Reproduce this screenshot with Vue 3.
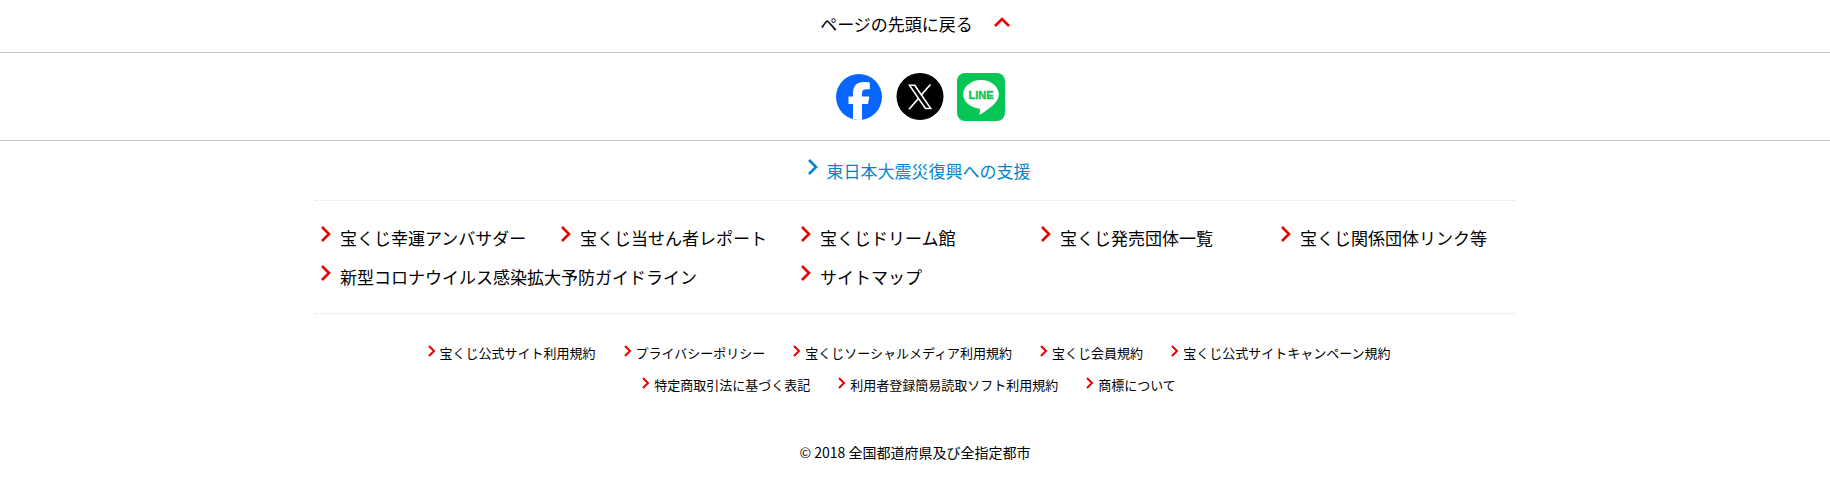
<template>
  <footer class="footer">
    <div class="page-top">
      <a href="#" class="page-top-link">
        <span>ページの先頭に戻る</span>
        <svg class="icon-up" viewBox="0 0 16 10" aria-hidden="true">
          <path d="M1 9L8 2L15 9" />
        </svg>
      </a>
    </div>

    <ul class="sns">
      <li>
        <a href="#" aria-label="Facebook">
          <svg class="icon-sns" viewBox="0 0 48 48">
            <clipPath id="fb-circle"><circle cx="24" cy="24" r="23" /></clipPath>
            <g clip-path="url(#fb-circle)">
              <rect width="48" height="48" fill="#0866ff" />
              <path
                fill="#fff"
                d="M18 48V31H13.500V23.500H18V20.500C18 12.800 21.800 9 29 9C31.200 9 33.600 9.200 34.800 9.600V16.200H31.500C28.300 16.200 27 17.500 27 20.500V23.500H34.300L33 31H27V48Z"
              />
            </g>
          </svg>
        </a>
      </li>
      <li>
        <a href="#" aria-label="X">
          <svg class="icon-sns" viewBox="0 0 48 48">
            <circle cx="24" cy="23.500" r="23.500" />
            <path
              fill="#fff"
              transform="translate(12 11.500) scale(.0202)"
              d="M714.163 519.284L1160.89 0H1055.03L667.137 450.887L357.328 0H0L468.492 681.821L0 1226.37H105.866L515.491 750.218L842.672 1226.37H1200L714.137 519.284ZM569.165 687.828L521.697 619.934L144.011 79.694H306.615L611.412 515.685L658.88 583.579L1055.08 1150.3H892.476L569.165 687.854Z"
            />
          </svg>
        </a>
      </li>
      <li>
        <a href="#" aria-label="LINE">
          <svg class="icon-sns" viewBox="0 0 48 48">
            <rect width="48" height="48" rx="8" fill="#06c755" />
            <path
              fill="#fff"
              d="M24 7C33.700 7 41.800 13.300 41.800 21.300C41.800 24.500 40.500 27.400 37.900 30.300C34.100 34.600 26 40 23.900 41.200C22.600 41.900 22.400 41.200 22.600 40.200L23 37.400C23.200 36.200 22.900 35.600 21.500 35.400C12.700 34.300 6.200 28.400 6.200 21.300C6.200 13.300 14.300 7 24 7Z"
            />
            <text class="line-text" x="24" y="26" text-anchor="middle">LINE</text>
          </svg>
        </a>
      </li>
    </ul>

    <div class="inner">
      <p class="support">
        <a href="#" class="arrow-link blue">
          <svg class="icon-arrow" viewBox="0 0 10 16" aria-hidden="true">
            <path d="M1 1L8 8L1 15" />
          </svg>
          <span>東日本大震災復興への支援</span>
        </a>
      </p>

      <ul class="main-nav">
        <li v-for="item in mainLinks" :key="item.text" :class="{ wide: item.wide }">
          <a href="#" class="arrow-link">
            <svg class="icon-arrow" viewBox="0 0 10 16" aria-hidden="true">
              <path d="M1 1L8 8L1 15" />
            </svg>
            <span>{{ item.text }}</span>
          </a>
        </li>
      </ul>

      <ul class="sub-nav">
        <li v-for="text in subLinks" :key="text">
          <a href="#" class="sub-link">
            <svg class="icon-arrow-small" viewBox="0 0 8 12" aria-hidden="true">
              <path d="M1 1L6 6L1 11" />
            </svg>
            <span>{{ text }}</span>
          </a>
        </li>
      </ul>

      <p class="copyright">© 2018 全国都道府県及び全指定都市</p>
    </div>
  </footer>
</template>

<script setup>
const mainLinks = [
  { text: '宝くじ幸運アンバサダー' },
  { text: '宝くじ当せん者レポート' },
  { text: '宝くじドリーム館' },
  { text: '宝くじ発売団体一覧' },
  { text: '宝くじ関係団体リンク等' },
  { text: '新型コロナウイルス感染拡大予防ガイドライン', wide: true },
  { text: 'サイトマップ' }
]

const subLinks = [
  '宝くじ公式サイト利用規約',
  'プライバシーポリシー',
  '宝くじソーシャルメディア利用規約',
  '宝くじ会員規約',
  '宝くじ公式サイトキャンペーン規約',
  '特定商取引法に基づく表記',
  '利用者登録簡易読取ソフト利用規約',
  '商標について'
]
</script>

<style>
body {
  margin: 0;
  background: #fff;
}
</style>

<style scoped>
.footer {
  font-family: "Noto Sans CJK JP", sans-serif;
  font-size: 17px;
  line-height: 26px;
  color: #000;
}

ul,
p {
  margin: 0;
  padding: 0;
  list-style: none;
}

a {
  color: inherit;
  text-decoration: none;
}

svg {
  display: block;
  flex: none;
}

.page-top {
  padding: 11px 0 15px;
  border-bottom: 1px solid #c8c8c8;
}

.page-top-link {
  display: flex;
  justify-content: center;
  gap: 21px;
}

.icon-up {
  width: 16px;
  height: 10px;
  margin-top: 6px;
}

.icon-up path,
.icon-arrow path,
.icon-arrow-small path {
  fill: none;
  stroke: #e80000;
  stroke-width: 2.6;
}

.icon-arrow-small path {
  stroke-width: 2;
}

.sns {
  display: flex;
  justify-content: center;
  gap: 13px;
  padding: 20px 0 19px 10px;
  border-bottom: 1px solid #c8c8c8;
}

.icon-sns {
  width: 48px;
  height: 48px;
}

.line-text {
  font-family: "Liberation Sans", Arial, sans-serif;
  font-size: 11px;
  font-weight: bold;
  fill: #06c755;
  stroke: #06c755;
  stroke-width: 0.4;
}

.inner {
  max-width: 1200px;
  margin: 0 auto;
}

.support {
  display: flex;
  justify-content: center;
  padding: 18px 0 18px 8px;
}

.arrow-link {
  display: flex;
  gap: 9px;
  line-height: 23px;
}

.icon-arrow {
  width: 10px;
  height: 16px;
}

.blue {
  color: #0086cc;
}

.blue .icon-arrow path {
  stroke: #0086cc;
}

.main-nav {
  display: grid;
  grid-template-columns: repeat(5, 1fr);
  row-gap: 16px;
  padding: 25px 0;
  border-top: 1px dotted #ddd;
  border-bottom: 1px dotted #ddd;
}

.main-nav li {
  padding-left: 6px;
  white-space: nowrap;
}

.main-nav .wide {
  grid-column: span 2;
}

.sub-nav {
  display: flex;
  flex-wrap: wrap;
  justify-content: center;
  row-gap: 16px;
  max-width: 1100px;
  margin: 0 auto;
  padding: 31px 0 48px;
  font-size: 13px;
  line-height: 16px;
}

.sub-nav li {
  margin: 0 20px 0 8px;
}

.sub-link {
  display: flex;
  gap: 4px;
}

.icon-arrow-small {
  width: 8px;
  height: 12px;
}

.copyright {
  font-size: 14px;
  line-height: 22px;
  text-align: center;
}
</style>
